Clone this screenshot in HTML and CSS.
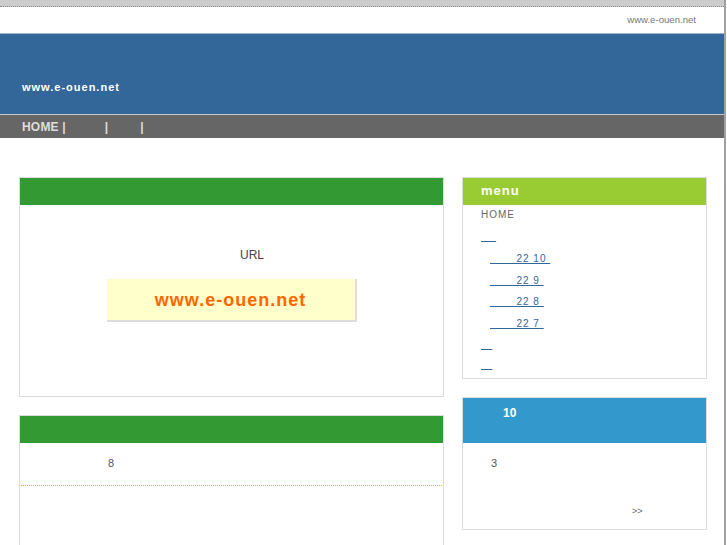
FILE: index.html
```html
<!DOCTYPE html>
<html lang="ja">
<head>
    <meta charset="UTF-8">
    <meta name="viewport" content="width=device-width, initial-scale=1.0">
    <title>www.e-ouen.net</title>
    <link rel="stylesheet" href="styles.css">
</head>
<body>
    <div class="page">
        <div class="topline"></div>
        <div class="header">www.e-ouen.net</div>
        <div class="banner">
            <h1>www.e-ouen.net</h1>
        </div>
        <div class="nav"><a href="#">HOME</a> |&nbsp;&nbsp;&nbsp;&nbsp;&nbsp;&nbsp;&nbsp;&nbsp;&nbsp;&nbsp; |&nbsp;&nbsp;&nbsp;&nbsp;&nbsp;&nbsp;&nbsp;&nbsp; |</div>

        <div class="main">
            <div class="left">
                <div class="box">
                    <div class="box-head green"></div>
                    <div class="box-body intro">
                        <p class="url-label">URL</p>
                        <div class="url-card">www.e-ouen.net</div>
                    </div>
                </div>

                <div class="box">
                    <div class="box-head green"></div>
                    <div class="box-body">
                        <div class="entry">8</div>
                        <div class="entry-rest"></div>
                    </div>
                </div>
            </div>

            <div class="right">
                <div class="box">
                    <div class="box-head lime">menu</div>
                    <ul class="menu">
                        <li class="home">HOME</li>
                        <li class="has-sub">
                            <a href="#">&nbsp;&nbsp;&nbsp;&nbsp;</a>
                            <ul class="sub">
                                <li><a href="#">&nbsp;&nbsp;&nbsp;&nbsp;&nbsp;&nbsp;&nbsp;22&nbsp;10&nbsp;</a></li>
                                <li><a href="#">&nbsp;&nbsp;&nbsp;&nbsp;&nbsp;&nbsp;&nbsp;22&nbsp;9&nbsp;</a></li>
                                <li><a href="#">&nbsp;&nbsp;&nbsp;&nbsp;&nbsp;&nbsp;&nbsp;22&nbsp;8&nbsp;</a></li>
                                <li><a href="#">&nbsp;&nbsp;&nbsp;&nbsp;&nbsp;&nbsp;&nbsp;22&nbsp;7&nbsp;</a></li>
                            </ul>
                        </li>
                        <li><a href="#">&nbsp;&nbsp;&nbsp;</a></li>
                        <li><a href="#">&nbsp;&nbsp;&nbsp;</a></li>
                    </ul>
                </div>

                <div class="box">
                    <div class="box-head blue">10</div>
                    <div class="box-body news">
                        <p class="news-text">3</p>
                        <p class="more">&gt;&gt;</p>
                    </div>
                </div>
            </div>
        </div>
    </div>
</body>
</html>
```

FILE: styles.css
```css
*{
    margin: 0;
    padding: 0;
}

body{
    background: #fff;
    font-family: "Liberation Sans", Arial, sans-serif;
    color: #444;
}

ul{
    list-style: none;
}

a{
    color: #336699;
}

.page{
    width: 724px;
    min-height: 545px;
    border-right: 2px solid #a0a0a0;
    background: #fff;
}

.topline{
    height: 6px;
    background: #cccccc;
    border-bottom: 1px dotted #888;
}

.header{
    height: 26px;
    line-height: 26px;
    padding-right: 28px;
    text-align: right;
    font-size: 9.6px;
    color: #777;
}

.banner{
    height: 80px;
    background: #336699;
    border-top: 1px solid #9fb3c9;
    border-bottom: 1px solid #c8c8c8;
}

.banner h1{
    padding: 47px 0 0 22px;
    font-size: 11px;
    line-height: 13px;
    letter-spacing: 1px;
    color: #fff;
}

.nav{
    height: 23px;
    line-height: 24px;
    padding-left: 22px;
    background: #666;
    color: #ddd;
    font-size: 12px;
    font-weight: bold;
    letter-spacing: 0.2px;
    white-space: nowrap;
}

.nav a{
    color: #ddd;
    text-decoration: none;
}

.main{
    display: flex;
    gap: 18px;
    padding: 39px 0 0 19px;
}

.left{
    width: 425px;
}

.right{
    width: 245px;
}

.box{
    border: 1px solid #dcdcdc;
    margin-bottom: 18px;
}

.box-head{
    height: 27px;
    color: #fff;
    font-weight: bold;
}

.green{
    background: #339933;
}

.lime{
    background: #99cc33;
    padding-left: 18px;
    font-size: 13px;
    line-height: 26px;
    letter-spacing: 1px;
}

.blue{
    height: 45px;
    background: #3399cc;
    padding-left: 40px;
    font-size: 12px;
    line-height: 30px;
}

.intro{
    height: 191px;
    padding-top: 43px;
    box-sizing: border-box;
}

.url-label{
    padding-left: 41px;
    text-align: center;
    font-size: 12px;
    line-height: 14px;
}

.url-card{
    width: 248px;
    height: 41px;
    margin: 17px auto 0;
    background: #ffffcc;
    border-right: 2px solid #ddd;
    border-bottom: 2px solid #ddd;
    text-align: center;
    line-height: 42px;
    font-size: 18px;
    font-weight: bold;
    letter-spacing: 1px;
    color: #ff6600;
}

.entry{
    margin: 0 1px;
    padding: 12px 0 14px 87px;
    line-height: 16px;
    font-size: 11px;
    color: #555;
    border-bottom: 1px dotted #ffa500;
}

.entry-rest{
    height: 80px;
}

.menu{
    padding: 0 0 0 18px;
    height: 173px;
    font-size: 10px;
    letter-spacing: 1px;
}

.menu > li{
    line-height: 18px;
}

.menu > li + li{
    margin-top: 2px;
}

.menu .home{
    margin-bottom: 4px;
    line-height: 19px;
    color: #666;
}

.menu .has-sub{
    margin-bottom: 2px;
}

.sub{
    padding-left: 9px;
    margin-top: 2px;
}

.sub li{
    line-height: 21.5px;
}

.news{
    height: 86px;
    padding: 14px 0 0 28px;
    box-sizing: border-box;
    font-size: 11px;
    color: #555;
}

.more{
    margin: 37px 0 0 141px;
    font-size: 9px;
    color: #666;
}
```
